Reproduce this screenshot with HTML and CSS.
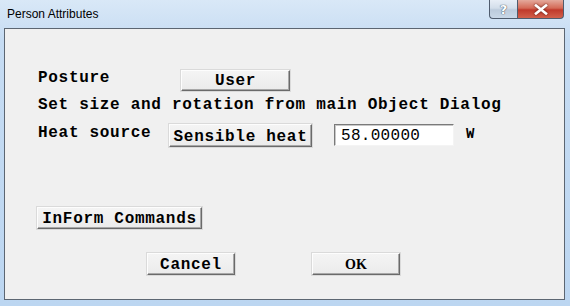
FILE: index.html
```html
<!DOCTYPE html>
<html>
<head>
<meta charset="utf-8">
<link rel="stylesheet" href="styles.css">
</head>
<body>
<div class="window">
  <div class="titlebar">
    <span class="title">Person Attributes</span>
    <div class="caption">
      <div class="cap-btn help">?</div>
      <div class="cap-btn close">
        <svg width="14" height="11" viewBox="0 0 14 11"><path d="M2 1.5 L12 9.5 M12 1.5 L2 9.5" stroke="#fff" stroke-width="2.6" stroke-linecap="square"/></svg>
      </div>
    </div>
  </div>
  <div class="panel">
    <div class="row row-posture">
      <span class="label label-posture">Posture</span>
      <button class="btn btn-user">User</button>
    </div>
    <div class="row row-info">
      <span class="label">Set size and rotation from main Object Dialog</span>
    </div>
    <div class="row row-heat">
      <span class="label label-heat">Heat source</span>
      <button class="btn btn-heat">Sensible heat</button>
      <div class="field">58.00000</div>
      <span class="label unit">W</span>
    </div>
    <div class="row row-inform">
      <button class="btn btn-inform">InForm Commands</button>
    </div>
    <div class="row row-actions">
      <button class="btn btn-cancel">Cancel</button>
      <button class="btn btn-ok">OK</button>
    </div>
  </div>
</div>
</body>
</html>
```
FILE: styles.css
```css
html, body {
  margin: 0;
  padding: 0;
}
body {
  width: 570px;
  height: 306px;
  overflow: hidden;
}
.window {
  width: 570px;
  height: 306px;
  background: linear-gradient(180deg, #d9e8f7 0px, #c6dcf3 40px, #bcd6f1 100%);
  box-sizing: border-box;
}
.titlebar {
  height: 28px;
  display: flex;
  align-items: flex-start;
  justify-content: space-between;
  padding-left: 7px;
  padding-right: 6px;
  box-sizing: border-box;
}
.title {
  font-family: "Liberation Sans", Arial, sans-serif;
  font-size: 12px;
  line-height: 14px;
  color: #000;
  margin-top: 7px;
}
.caption {
  display: flex;
  height: 19px;
}
.cap-btn {
  height: 19px;
  box-sizing: border-box;
  display: flex;
  align-items: center;
  justify-content: center;
  border: 1px solid #4f5c6e;
  border-top: none;
}
.help {
  width: 28px;
  border-right: none;
  border-bottom-left-radius: 4px;
  background: linear-gradient(180deg, #e8eef6 0%, #d3deea 45%, #bccbdc 55%, #c9d8e8 100%);
  font-family: "DejaVu Sans", sans-serif;
  font-weight: bold;
  font-size: 13px;
  color: #fff;
  text-shadow: 0 0 1px #3a4a5e, 0 0 1px #3a4a5e;
}
.close {
  width: 47px;
  border-bottom-right-radius: 4px;
  background: linear-gradient(180deg, #e4a99c 0%, #d46a57 45%, #c0392b 55%, #d2604b 100%);
}
.close svg {
  filter: drop-shadow(0 0 1px #5a1a12);
}
.panel {
  margin-left: 4px;
  width: 561px;
  height: 272px;
  box-sizing: border-box;
  border: 1px solid #5c6672;
  background: #f0f0f0;
  padding: 41px 0 0 33px;
  font-family: "Liberation Mono", "Courier New", monospace;
  font-weight: bold;
  font-size: 16px;
  letter-spacing: 0.7px;
  color: #000;
}
.row {
  display: flex;
  align-items: flex-start;
}
.label {
  line-height: 18px;
  white-space: nowrap;
}
.label-posture {
  width: 143px;
  margin-top: -1px;
}
.row-info {
  margin-top: 5px;
}
.row-heat {
  margin-top: 10px;
}
.label-heat {
  width: 131px;
}
.btn {
  font: inherit;
  letter-spacing: inherit;
  color: #000;
  margin: 0;
  padding: 0;
  box-sizing: border-box;
  background: linear-gradient(180deg, #f4f4f4 0%, #ebebeb 100%);
  border: 1px solid;
  border-color: #fdfdfd #6a6a6a #6a6a6a #fdfdfd;
  box-shadow: inset -1px -1px 0 #a8a8a8, 0 0 0 1px #dadada;
  text-align: center;
  line-height: 18px;
}
.btn-user {
  width: 109px;
  height: 21px;
  padding-top: 1px;
}
.btn-heat {
  width: 143px;
  height: 23px;
  padding-top: 2px;
}
.field {
  margin-left: 22px;
  width: 120px;
  height: 22px;
  box-sizing: border-box;
  background: #fff;
  border: 1px solid;
  border-color: #7a7a7a #f4f4f4 #f4f4f4 #7a7a7a;
  box-shadow: inset 1px 1px 0 #c8c8c8;
  font-weight: normal;
  letter-spacing: 0.3px;
  line-height: 18px;
  padding: 2px 0 0 6px;
}
.unit {
  margin-left: 12px;
  font-size: 14px;
  margin-top: 1px;
}
.row-inform {
  margin-top: 60px;
  margin-left: -1px;
}
.btn-inform {
  width: 165px;
  height: 22px;
  padding-top: 1px;
}
.row-actions {
  margin-top: 24px;
  margin-left: 109px;
  gap: 77px;
}
.btn-cancel {
  width: 88px;
  height: 22px;
  padding-top: 2px;
}
.btn-ok {
  width: 88px;
  height: 22px;
  font-family: "Liberation Serif", "Times New Roman", serif;
  font-weight: bold;
  font-size: 14px;
  letter-spacing: 0;
  padding-top: 1px;
}
```
